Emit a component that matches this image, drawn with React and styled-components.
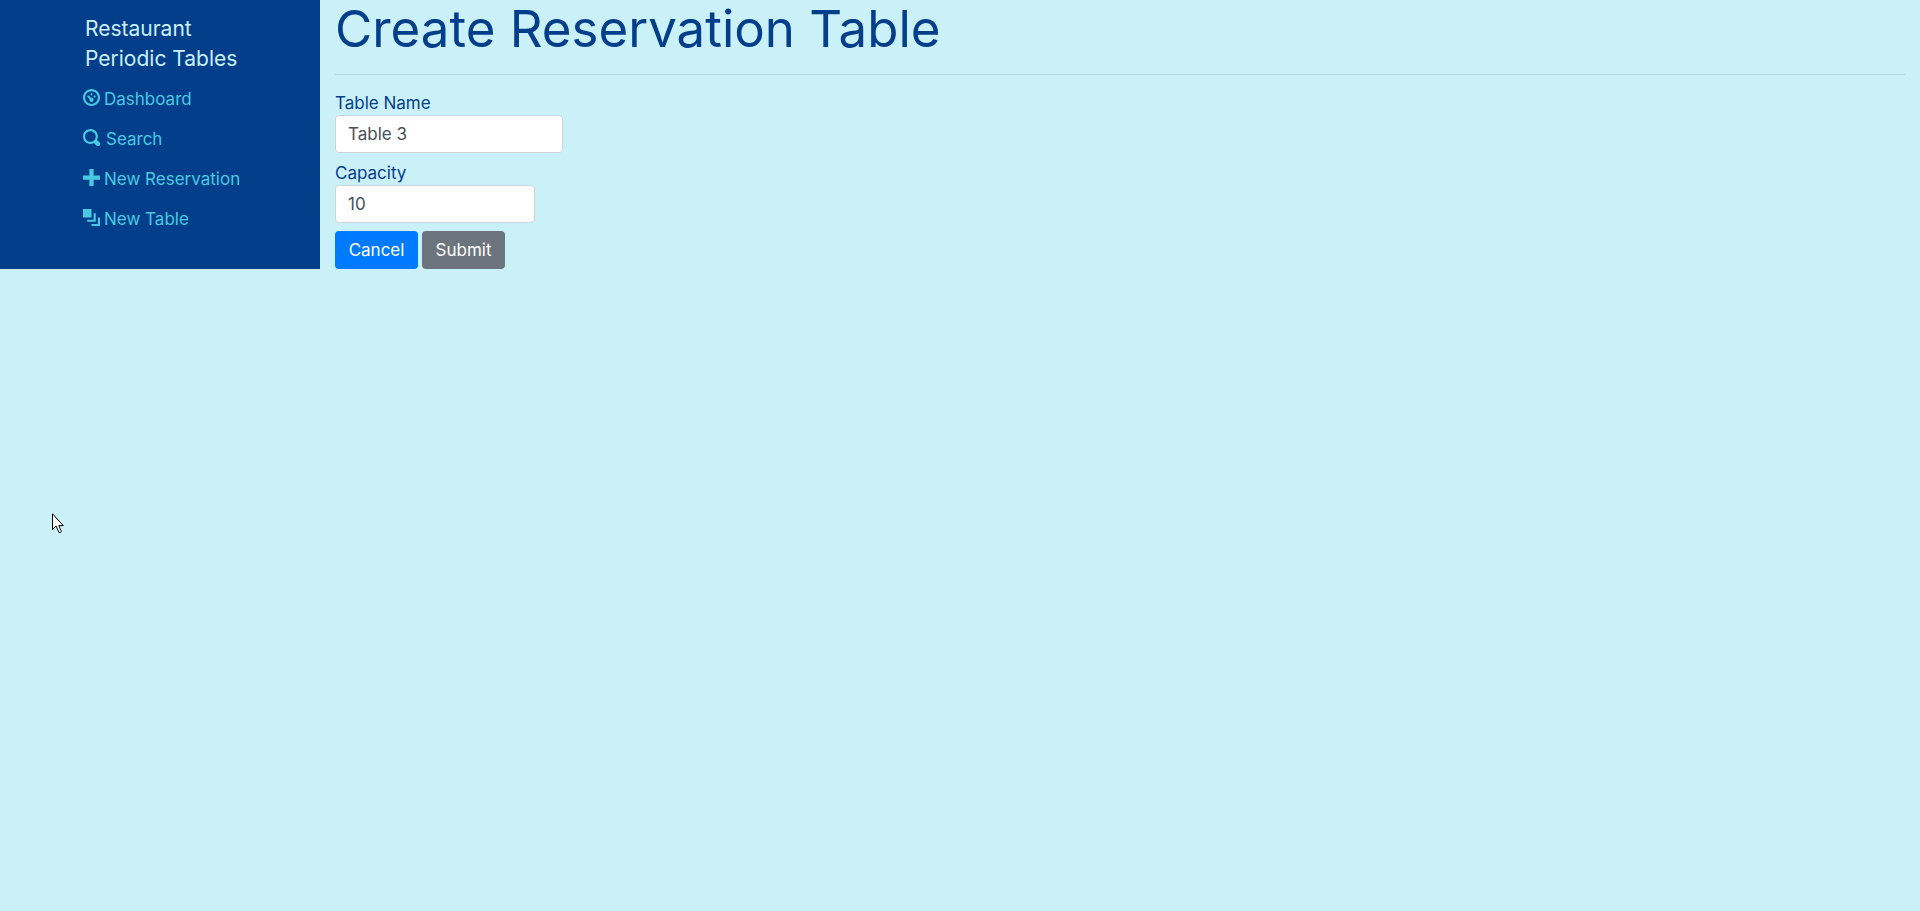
import React, { useState } from "react";
import styled, { createGlobalStyle } from "styled-components";

const GlobalStyle = createGlobalStyle`
  *, *::before, *::after { box-sizing: border-box; }
  body {
    margin: 0;
    background: #caf0f8;
    color: #023e8a;
    font: 400 17px/24px Inter, "Open Sans", sans-serif;
  }
`;

const Layout = styled.div`
  display: flex;
  align-items: stretch;
`;

const Sidebar = styled.nav`
  flex: 0 0 16.6667%;
  display: flex;
  justify-content: center;
  background: #023e8a;
`;

const SidebarInner = styled.div`
  width: 154px;
  padding: 14px 0 15px;
`;

const Brand = styled.a`
  display: block;
  margin: 0 0 5px 2px;
  color: #caf0f8;
  font-size: 21px;
  line-height: 30px;
  text-decoration: none;
  white-space: nowrap;
`;

const BrandLine = styled.span`
  display: block;
`;

const NavList = styled.ul`
  margin: 0;
  padding: 0;
  list-style: none;
`;

const NavLink = styled.a`
  display: flex;
  align-items: center;
  gap: ${(p) => (p.$wide ? 6 : 4)}px;
  padding: 8px 0;
  color: #48cae4;
  text-decoration: none;
  white-space: nowrap;
`;

const Icon = styled.svg`
  flex: none;
  width: 17px;
  height: 17px;
  margin-bottom: 4px;
  fill: currentColor;
`;

const Main = styled.main`
  flex: 1;
  min-width: 0;
  padding: 0 15px;
`;

const Title = styled.h1`
  margin: 0;
  font-size: 51px;
  font-weight: 400;
  line-height: 58px;
`;

const Divider = styled.hr`
  margin: 16px 0;
  border: 0;
  border-top: 1px solid rgba(0, 0, 0, 0.1);
`;

const Form = styled.form`
  display: flex;
  flex-direction: column;
  gap: 8px;
`;

const Field = styled.div`
  display: flex;
  flex-direction: column;
  align-items: flex-start;
`;

const TextInput = styled.input`
  width: ${(p) => p.$width}px;
  height: 38px;
  padding: 6px 12px;
  border: 1px solid #ced4da;
  border-radius: 4px;
  background: #fff;
  color: #495057;
  font: inherit;
  outline: none;
`;

const Actions = styled.div`
  display: flex;
  gap: 4px;
`;

const Button = styled.button`
  width: 83px;
  height: 38px;
  padding: 0;
  border: 0;
  border-radius: 4px;
  background: ${(p) => (p.$primary ? "#007bff" : "#6c757d")};
  color: #fff;
  font: inherit;
`;

const Cursor = styled.svg`
  position: absolute;
  left: 52px;
  top: 513px;
  width: 12px;
  height: 21px;
  pointer-events: none;
`;

const links = [
  {
    label: "Dashboard",
    path: "M4 0c-2.2 0-4 1.8-4 4s1.8 4 4 4 4-1.8 4-4-1.8-4-4-4zm0 1c1.66 0 3 1.34 3 3s-1.34 3-3 3-3-1.34-3-3 1.34-3 3-3zm0 1c-.28 0-.5.22-.5.5s.22.5.5.5.5-.22.5-.5-.22-.5-.5-.5zm-1.66 1a.5.5 0 0 0-.19.84l.91.91c-.02.08-.06.16-.06.25 0 .55.45 1 1 1s1-.45 1-1-.45-1-1-1c-.09 0-.17.04-.25.06l-.91-.91a.5.5 0 0 0-.44-.16.5.5 0 0 0-.06 0zm3.16 0c-.28 0-.5.22-.5.5s.22.5.5.5.5-.22.5-.5-.22-.5-.5-.5z",
  },
  {
    label: "Search",
    wide: true,
    path: "M3.5 0c-1.93 0-3.5 1.57-3.5 3.5s1.57 3.5 3.5 3.5c.59 0 1.17-.14 1.66-.41a1 1 0 0 0 .13.13l1 1a1.02 1.02 0 1 0 1.44-1.44l-1-1a1 1 0 0 0-.16-.13c.27-.49.44-1.06.44-1.66 0-1.93-1.55-3.5-3.5-3.5zm0 1c1.39 0 2.5 1.11 2.5 2.5 0 .66-.24 1.27-.66 1.72-.01.01-.02.02-.03.03a1 1 0 0 0-.13.13c-.44.4-1.04.63-1.69.63-1.39 0-2.5-1.11-2.5-2.5s1.11-2.5 2.5-2.5z",
  },
  { label: "New Reservation", path: "M3 0v3h-3v2h3v3h2v-3h3v-2h-3v-3h-2z" },
  {
    label: "New Table",
    path: "M0 0v4h4v-4h-4zm5 2v3h-3v1h4v-4h-1zm2 2v3h-3v1h4v-4h-1z",
  },
];

export default function App() {
  const [name, setName] = useState("Table 3");
  const [capacity, setCapacity] = useState("10");

  return (
    <>
      <GlobalStyle />
      <Layout>
        <Sidebar>
          <SidebarInner>
            <Brand href="#">
              <BrandLine>Restaurant</BrandLine>
              <BrandLine>Periodic Tables</BrandLine>
            </Brand>
            <NavList>
              {links.map((link) => (
                <li key={link.label}>
                  <NavLink href="#" $wide={link.wide}>
                    <Icon viewBox="0 0 8 8" aria-hidden="true">
                      <path d={link.path} />
                    </Icon>
                    {link.label}
                  </NavLink>
                </li>
              ))}
            </NavList>
          </SidebarInner>
        </Sidebar>
        <Main>
          <Title>Create Reservation Table</Title>
          <Divider />
          <Form onSubmit={(e) => e.preventDefault()}>
            <Field>
              <label htmlFor="table_name">Table Name</label>
              <TextInput
                id="table_name"
                $width={228}
                value={name}
                onChange={(e) => setName(e.target.value)}
              />
            </Field>
            <Field>
              <label htmlFor="capacity">Capacity</label>
              <TextInput
                id="capacity"
                inputMode="numeric"
                $width={200}
                value={capacity}
                onChange={(e) => setCapacity(e.target.value)}
              />
            </Field>
            <Actions>
              <Button type="button" $primary>
                Cancel
              </Button>
              <Button type="submit">Submit</Button>
            </Actions>
          </Form>
        </Main>
      </Layout>
      <Cursor viewBox="0 0 12 21" aria-hidden="true">
        <path
          d="M.5.8v15.7l3.6-3.5 2.7 6.2q1.4 1.3 2.6-.6l-2.6-6h4.5z"
          fill="#fff"
          stroke="#000"
        />
      </Cursor>
    </>
  );
}
